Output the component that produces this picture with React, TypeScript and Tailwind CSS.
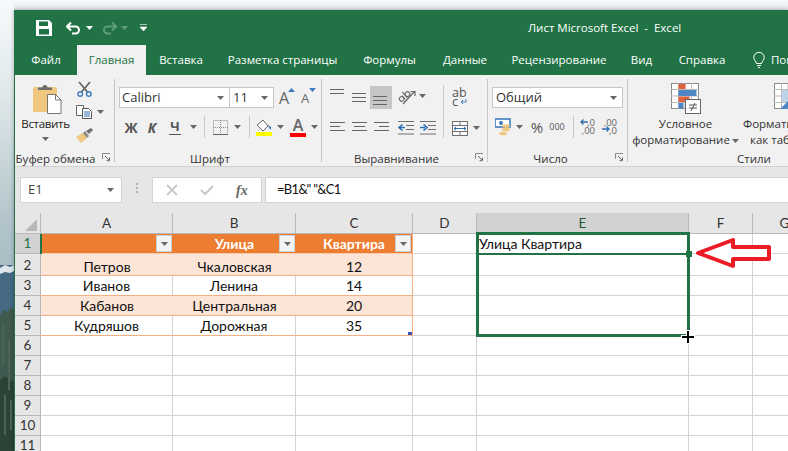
import React from "react";

const Caret = ({ c = "#666", className = "" }: { c?: string; className?: string }) => (
  <svg width="7" height="4" viewBox="0 0 7 4" className={`shrink-0 ${className}`}><path d="M0 0h7L3.5 4z" fill={c} /></svg>
);

const Lines = ({ rows }: { rows: [number, number][] }) => (
  <svg width="16" height="14" viewBox="0 0 16 14">
    {rows.map(([x, w], i) => <rect key={i} x={x} y={i * 4 + 1} width={w} height="1" fill="#666" />)}
  </svg>
);

const Launcher = () => (
  <svg width="9" height="9" viewBox="0 0 9 9" className="absolute right-[3px] top-[4px]">
    <path d="M.5 6V.5H8" fill="none" stroke="#8a8a8a" /><path d="M3 3l4 4M7.5 4.500v3.200H4.500" fill="none" stroke="#666" />
  </svg>
);

const Group = ({ w, label, launcher, pr = "", children }: { w: string; label: string; launcher?: boolean; pr?: string; children: React.ReactNode }) => (
  <div className={`flex h-full shrink-0 flex-col ${w}`}>
    <div className="min-h-0 flex-1">{children}</div>
    <div className={`relative h-[17px] text-center leading-[19px] text-[#333] ${pr}`}>
      {label}
      {launcher && <Launcher />}
    </div>
  </div>
);
const Sep = () => <div className="my-1 w-px shrink-0 bg-[#c6c6c6]" />;
const VSep = ({ className = "" }: { className?: string }) => <div className={`h-[22px] w-px shrink-0 bg-[#c8c8c8] ${className}`} />;

const Save = () => (
  <svg width="16" height="16" viewBox="0 0 16 16" className="shrink-0">
    <path fillRule="evenodd" d="M0 0h13l3 3v13H0zM3 1.500v4.500h9V1.500zM3 9v5.500h10V9z" fill="#fff" />
  </svg>
);
const Undo = ({ c }: { c: string }) => (
  <svg width="15" height="14" viewBox="0 0 15 14" className="block shrink-0">
    <path d="M1 5.500h8.500a3.500 3.500 0 0 1 0 7H6M5 1.500l-4 4 4 4" fill="none" stroke={c} strokeWidth="2" />
  </svg>
);
const Redo = ({ c }: { c: string }) => (
  <svg width="15" height="14" viewBox="0 0 15 14" className="block shrink-0">
    <path d="M14 5.500H5.500a3.500 3.500 0 0 0 0 7H9M10 1.500l4 4-4 4" fill="none" stroke={c} strokeWidth="2" />
  </svg>
);

const Paste = () => (
  <svg width="29" height="30" viewBox="0 0 29 30">
    <rect x="0" y="3" width="24" height="25" rx="1.500" fill="#efc77f" />
    <path d="M5 6V3.500h4.500a2.500 2.500 0 0 1 5 0H19V6z" fill="#6d6d6d" />
    <path d="M14.500 10.500h8l5.500 5.500v13.500H14.500z" fill="#fff" stroke="#777" />
    <path d="M22.500 10.500V16H28" fill="none" stroke="#777" />
  </svg>
);
const Scissors = () => (
  <svg width="15" height="16" viewBox="0 0 15 16" className="block">
    <path d="M2 1l8.500 10M13 1L4.500 11" stroke="#666" strokeWidth="1.800" fill="none" />
    <circle cx="3.200" cy="13" r="2.300" fill="none" stroke="#3f7cbd" strokeWidth="1.400" />
    <circle cx="11.800" cy="13" r="2.300" fill="none" stroke="#3f7cbd" strokeWidth="1.400" />
  </svg>
);
const Copy = () => (
  <svg width="16" height="14" viewBox="0 0 16 14">
    <path d="M.5.500h7v10h-7z" fill="#fff" stroke="#666" />
    <path d="M6.500 3.500h6l3 3v7h-9z" fill="#fff" stroke="#555" />
    <path d="M8 7h6M8 9h6M8 11h6" stroke="#2f6fb0" />
  </svg>
);
const Brush = () => (
  <svg width="17" height="15" viewBox="0 0 17 15" className="block">
    <path d="M0 9l5 6 6-5-4-5z" fill="#efc77f" />
    <path d="M7 5l4 5 2-2-4-5z" fill="#8a8a8a" />
    <path d="M10 3l3 3 4-4-2-2z" fill="#707070" />
  </svg>
);

const ABig = ({ up }: { up: boolean }) => (
  <span className="relative flex h-[21px] w-[14px] items-end justify-center text-[#666]">
    <span className={`${up ? "text-[16px]" : "text-[13px]"} leading-[19px]`}>A</span>
    <svg width="7" height="4" viewBox="0 0 7 4" className="absolute right-[-4px] top-[1px]"><path d={up ? "M0 4h7L3.500 0z" : "M0 0h7L3.500 4z"} fill="#3f7cbd" /></svg>
  </span>
);
const BorderIcon = () => (
  <svg width="15" height="15" viewBox="0 0 15 15">
    <rect x=".5" y=".5" width="14" height="14" fill="none" stroke="#888" strokeDasharray="1 1" />
    <path d="M7.500 0v15M0 7.500h15" stroke="#888" strokeDasharray="1 1" />
    <path d="M0 14.500h15" stroke="#666" />
  </svg>
);
const Fill = () => (
  <svg width="17" height="18" viewBox="0 0 17 18">
    <path d="M1 7l6-5 5 6-5 5z" fill="#fff" stroke="#666" />
    <path d="M12 7l3 2 0 3-2-2z" fill="#3f7cbd" />
    <rect x="0" y="14" width="16" height="4" fill="#ffff00" />
  </svg>
);
const FontColor = () => (
  <span className="flex w-4 flex-col items-center">
    <span className="text-[16px] font-semibold leading-[14px] text-[#666]">A</span>
    <span className="mt-[1px] h-1 w-4 bg-[#ff0000]" />
  </span>
);
const Orient = () => (
  <svg width="18" height="17" viewBox="0 0 18 17">
    <g transform="rotate(-40 6 9)" fill="#666" stroke="#666" strokeWidth="1.100">
      <circle cx="3" cy="9" r="2.300" fill="none" />
      <path d="M5.300 6.500v5" />
      <path d="M8 4v7.500" />
      <circle cx="10.500" cy="9" r="2.300" fill="none" />
    </g>
    <path d="M5 16L16 4M12.500 3.500H17V8" fill="none" stroke="#666" strokeWidth="1.200" />
  </svg>
);
const Wrap = () => (
  <span className="relative block h-[18px] w-[16px] whitespace-pre text-[12.5px] leading-[9px] text-[#555]">
    {"ab\nc"}
    <svg width="7" height="6" viewBox="0 0 7 6" className="absolute bottom-[1px] right-[1px]"><path d="M6 0v3H1M3 1L1 3l2 2" fill="none" stroke="#3f7cbd" /></svg>
  </span>
);
const Indent = ({ right }: { right: boolean }) => (
  <svg width="16" height="14" viewBox="0 0 16 14">
    <path d="M0 .5h16M8 4.500h8M8 8.500h8M0 13h16" stroke="#707070" />
    <path d={right ? "M0 6.500h5M3.500 3.500L7 6.500l-3.500 3" : "M7 6.500H2M4.500 3.500L1 6.500l3.500 3"} fill="none" stroke="#2f6fb0" strokeWidth="1.600" />
  </svg>
);
const Merge = () => (
  <svg width="16" height="15" viewBox="0 0 16 15">
    <rect x=".5" y=".5" width="15" height="14" fill="#fff" stroke="#707070" />
    <path d="M0 4.500h16M0 10.500h16M8 .5v4M8 10.500v4" stroke="#707070" />
    <path d="M2 7.500h12M4 5.800L2 7.500l2 1.700M12 5.800l2 1.700-2 1.700" fill="none" stroke="#2f6fb0" />
  </svg>
);
const Money = () => (
  <svg width="17" height="18" viewBox="0 0 17 18">
    <rect x="0" y="1" width="15" height="8" fill="#fff" stroke="#3f7cbd" strokeWidth="1.600" />
    <circle cx="6" cy="5" r="2" fill="#3f7cbd" />
    <ellipse cx="11" cy="8" rx="4" ry="1.800" fill="#efc77f" />
    <ellipse cx="11" cy="11.500" rx="4" ry="1.800" fill="#efc77f" />
    <ellipse cx="8" cy="15.500" rx="4" ry="1.800" fill="#efc77f" />
  </svg>
);
const Dec = ({ inc }: { inc: boolean }) => (
  <span className="relative block h-[16px] w-[15px] whitespace-pre text-right text-[9.5px] leading-[8px] text-[#666]">
    {inc ? ",00\n,0" : ",0\n,00"}
    <svg width="8" height="6" viewBox="0 0 8 6" className={`absolute left-0 ${inc ? "top-[7px]" : "top-0"}`}>
      <path d={inc ? "M0 3h7M4.500 .5L7 3 4.500 5.500" : "M8 3H1M3.500 .5L1 3l2.500 2.500"} fill="none" stroke="#2f6fb0" strokeWidth="1.300" />
    </svg>
  </span>
);
const CondFormat = () => (
  <svg width="30" height="31" viewBox="0 0 30 31">
    <rect x=".5" y=".5" width="27" height="25" fill="#fff" stroke="#8a8a8a" />
    <path d="M7.500 0v26M14 0v26M20.500 0v26M0 6.500h28M0 13h28M0 19.500h28" stroke="#bdbdbd" />
    <rect x="7.500" y="1" width="7" height="5" fill="#e0653f" />
    <rect x="7.500" y="7" width="18" height="6" fill="#4f86c6" />
    <rect x="7.500" y="13.500" width="11" height="5.500" fill="#e0653f" />
    <rect x="7.500" y="20" width="5" height="5.500" fill="#4f86c6" />
    <rect x="14.500" y="16.500" width="15" height="14" fill="#fff" stroke="#666" />
    <path d="M18 22h8M18 25h8M24 20l-4 8" stroke="#555" fill="none" />
  </svg>
);
const TableFormat = () => (
  <svg width="30" height="31" viewBox="0 0 30 31" className="shrink-0">
    <rect x=".5" y=".5" width="29" height="25" fill="#fff" stroke="#8a8a8a" />
    <path d="M7.500 0v26M14 0v26M20.500 0v26M0 6.500h30M0 13h30M0 19.500h30" stroke="#bdbdbd" />
    <rect x="8" y="7" width="12" height="12" fill="#bcd3ea" />
    <path d="M6 26L22 10v16z" fill="#4f86c6" />
  </svg>
);

const tabs: [string, string][] = [
  ["Файл", "w-[62px]"],
  ["Главная", "w-[69px]"],
  ["Вставка", "w-[70px]"],
  ["Разметка страницы", "w-[133px]"],
  ["Формулы", "w-[81px]"],
  ["Данные", "w-[70px]"],
  ["Рецензирование", "w-[118px]"],
  ["Вид", "w-[47px]"],
  ["Справка", "w-[74px]"],
];

const TitleBar = () => (
  <div className="relative flex h-[35px] shrink-0 items-center bg-[#217346] pl-[21px] text-white">
    <Save />
    <span className="ml-[14px]"><Undo c="#fff" /></span>
    <Caret c="#fff" className="ml-[5px]" />
    <span className="ml-[9px]"><Redo c="#5f9a7b" /></span>
    <Caret c="#5f9a7b" className="ml-[4px]" />
    <svg width="7" height="7" viewBox="0 0 7 7" className="ml-[12px]"><path d="M0 .5h7M0 3h7L3.500 7z" fill="#fff" stroke="#fff" strokeWidth=".6" /></svg>
    <span className="ml-[381px] whitespace-pre text-[11.5px]">Лист Microsoft Excel  -  Excel</span>
  </div>
);

const TabBar = () => (
  <div className="flex h-[30px] shrink-0 items-stretch bg-[#217346] text-white">
    {tabs.map(([t, w]) => (
      <div key={t} className={`flex shrink-0 items-center justify-center ${w} ${t === "Главная" ? "bg-[#f1f1f1] text-[#217346]" : ""}`}>{t}</div>
    ))}
    <div className="ml-[14px] flex shrink-0 items-center gap-[6px]">
      <svg width="12" height="16" viewBox="0 0 12 16"><path d="M3.500 11.500C3 9 .8 8 .8 5.500a5.200 5.200 0 0 1 10.400 0C11.200 8 9 9 8.500 11.500zM4 13.500h4M5 15.500h2" fill="none" stroke="#fff" /></svg>
      <span className="whitespace-nowrap">Помощник</span>
    </div>
  </div>
);

const Ribbon = () => (
  <div className="flex h-[92px] shrink-0 overflow-hidden border-b border-[#d0d0d0] bg-[#f1f1f1] text-[#333]">
    <Group w="w-[99px]" label="Буфер обмена" launcher pr="pr-[18px]">
      <div className="flex">
        <div className="flex w-[61px] shrink-0 flex-col items-center pt-[9px]">
          <span className="ml-[4px] flex"><Paste /></span>
          <span className="mt-[1px] text-[11.5px] leading-[18px] tracking-[-0.3px] text-[#222]">Вставить</span>
          <Caret className="mt-[4px]" />
        </div>
        <div className="flex flex-col pt-[6px]">
          <span className="ml-[1px] h-[16px]"><Scissors /></span>
          <span className="mt-[8px] flex h-[14px] items-center"><Copy /><Caret className="ml-[5px]" /></span>
          <span className="mt-[9px] h-[15px]"><Brush /></span>
        </div>
      </div>
    </Group>
    <Sep />
    <Group w="w-[206px]" label="Шрифт" pr="pr-[16px]">
      <div className="mt-3 flex h-[21px] items-stretch pl-1 text-[13px]">
        <div className="flex w-[111px] items-center justify-between border border-[#c6c6c6] bg-white pl-[2px] pr-[5px]">Calibri<Caret /></div>
        <div className="flex w-[44px] items-center justify-between border border-l-0 border-[#c6c6c6] bg-white pl-[3px] pr-[5px]">11<Caret /></div>
        <span className="ml-[3px] flex"><ABig up /></span>
        <span className="ml-[7px] flex"><ABig up={false} /></span>
      </div>
      <div className="mt-2 flex h-[22px] items-center pl-[8px] text-[#555]">
        <span className="w-[16px] text-center text-[14px] font-bold">Ж</span>
        <span className="ml-[8px] w-[10px] text-center text-[14px] font-bold italic">К</span>
        <span className="ml-[12px] w-[12px] border-b border-[#555] text-center text-[13px] font-bold leading-[15px]">Ч</span>
        <Caret className="ml-[9px]" />
        <VSep className="ml-[7px]" />
        <span className="ml-[8px] flex"><BorderIcon /></span>
        <Caret className="ml-[6px]" />
        <VSep className="ml-[8px]" />
        <span className="ml-[6px] flex"><Fill /></span>
        <Caret className="ml-[4px]" />
        <span className="ml-[6px] flex"><FontColor /></span>
        <Caret className="ml-[5px]" />
      </div>
    </Group>
    <Sep />
    <Group w="w-[165px]" label="Выравнивание" launcher pr="pr-[16px]">
      <div className="flex pl-[8px]">
        <div className="flex w-[113px] flex-col">
          <div className="mt-[11px] flex h-[23px] items-start">
            <span className="mt-[2px] flex"><Lines rows={[[0, 14], [0, 14]]} /></span>
            <span className="ml-[6px] mt-[6px] flex"><Lines rows={[[0, 14], [0, 14], [0, 14]]} /></span>
            <span className="ml-[2px] flex h-[23px] w-[22px] items-end justify-center bg-[#c6c6c6]"><Lines rows={[[0, 14], [0, 14], [0, 14]]} /></span>
            <span className="ml-[6px] mt-[2px] flex"><Orient /></span>
            <Caret className="ml-[3px] mt-[8px]" />
          </div>
          <div className="mt-[8px] flex h-[22px] items-center">
            <Lines rows={[[0, 15], [0, 10], [0, 15]]} />
            <span className="ml-[6px] flex"><Lines rows={[[0, 15], [2, 11], [0, 15]]} /></span>
            <span className="ml-[6px] flex"><Lines rows={[[0, 15], [5, 10], [0, 15]]} /></span>
            <span className="ml-[8px] flex"><Indent right={false} /></span>
            <span className="ml-[6px] flex"><Indent right /></span>
          </div>
        </div>
        <div className="mt-[10px] h-[53px] w-px shrink-0 bg-[#c8c8c8]" />
        <div className="flex flex-col pl-[8px]">
          <span className="mt-[3px] flex h-[23px] pt-[10px]"><Wrap /></span>
          <span className="mt-[18px] flex h-[18px] items-center"><Merge /><Caret className="ml-[5px]" /></span>
        </div>
      </div>
    </Group>
    <Sep />
    <Group w="w-[139px]" label="Число" launcher pr="pr-[14px]">
      <div className="ml-1 mt-3 flex h-[21px] w-[131px] items-center justify-between border border-[#c6c6c6] bg-white pl-[3px] pr-[5px] text-[13px]">Общий<Caret /></div>
      <div className="mt-2 flex h-[22px] items-center pl-[7px] text-[#555]">
        <Money />
        <Caret className="ml-[4px]" />
        <span className="ml-[7px] w-[14px] text-center text-[15px] leading-[22px]">%</span>
        <span className="ml-[5px] w-[16px] text-center text-[9px]">000</span>
        <VSep className="ml-[8px]" />
        <span className="ml-[6px] flex"><Dec inc={false} /></span>
        <span className="ml-[7px] flex"><Dec inc /></span>
      </div>
    </Group>
    <Sep />
    <Group w="w-[252px]" label="Стили">
      <div className="flex pt-[8px]">
        <div className="flex w-[115px] shrink-0 flex-col items-center">
          <span className="flex"><CondFormat /></span>
          <span className="mt-[2px] leading-[16px]">Условное</span>
          <span className="flex items-center gap-[2px] whitespace-nowrap leading-[16px]">форматирование<Caret className="mt-[1px]" /></span>
        </div>
        <div className="flex shrink-0 flex-col items-start">
          <span className="ml-[31px] flex"><TableFormat /></span>
          <span className="mt-[2px] whitespace-nowrap leading-[16px]">Форматировать</span>
          <span className="ml-[7px] whitespace-nowrap leading-[16px]">как таблицу</span>
        </div>
      </div>
    </Group>
  </div>
);

const FormulaBar = () => (
  <div className="flex h-[46px] shrink-0 bg-[#e6e6e6] pl-[5px] pt-[10px]">
    <div className="flex h-[26px] w-[102px] items-center justify-between border border-[#d4d4d4] bg-white pl-[7px] pr-[7px] text-[13px] text-[#444]">E1<Caret /></div>
    <div className="ml-[13px] flex w-[4px] flex-col items-center gap-[2px] pt-[6px]">
      <span className="h-[2px] w-[2px] bg-[#b0b0b0]" /><span className="h-[2px] w-[2px] bg-[#b0b0b0]" /><span className="h-[2px] w-[2px] bg-[#b0b0b0]" />
    </div>
    <div className="ml-[13px] flex h-[26px] w-[110px] items-center border border-[#d4d4d4] bg-white pl-[13px]">
      <svg width="12" height="12" viewBox="0 0 12 12"><path d="M1 1l10 10M11 1L1 11" stroke="#c8c8c8" strokeWidth="1.800" /></svg>
      <svg width="14" height="12" viewBox="0 0 14 12" className="ml-[22px]"><path d="M1 6l4 4 8-8" fill="none" stroke="#c8c8c8" strokeWidth="2" /></svg>
      <span className="ml-[22px] font-['Liberation_Serif',serif] text-[14px] font-bold italic text-[#666]">fx</span>
    </div>
    <div className="ml-[3px] flex h-[26px] flex-1 items-center border border-r-0 border-[#d4d4d4] bg-white pl-[11px] font-['Lato',sans-serif] text-[13px] tracking-[-0.7px] text-[#111]">=B1&amp;" "&amp;C1</div>
  </div>
);

const cols = ["A", "B", "C", "D", "E", "F", "G"];
const data = [
  ["", "Улица", "Квартира"],
  ["Петров", "Чкаловская", "12"],
  ["Иванов", "Ленина", "14"],
  ["Кабанов", "Центральная", "20"],
  ["Кудряшов", "Дорожная", "35"],
];

const FilterBtn = () => (
  <span className="absolute bottom-[1px] right-[1px] flex h-[17px] w-[16px] items-center justify-center border border-[#c8d0d8] bg-[#f4f4f4]">
    <Caret c="#666" />
  </span>
);

const Sheet = () => (
  <div className="relative min-h-0 flex-1 overflow-hidden bg-white font-['Lato',sans-serif] text-[14px] text-[#111]">
    <div className="grid w-[840px] grid-cols-[26px_132px_123px_117px_64px_212px_64px_64px] grid-rows-[21px_20px_22px_repeat(9,20px)]">
      <div className="flex items-end justify-end border-b border-r border-[#b8b8b8] bg-[#e6e6e6] pb-[2px] pr-[3px]">
        <svg width="12" height="12" viewBox="0 0 12 12"><path d="M12 0v12H0z" fill="#b8b8b8" /></svg>
      </div>
      {cols.map((c) => (
        <div key={c} className={`flex items-center justify-center border-b border-r border-[#b8b8b8] pt-[1px] text-[13.5px] ${c === "E" ? "bg-[#d2d2d2] text-[#1f5c3b]" : "bg-[#e6e6e6] text-[#333]"}`}>{c}</div>
      ))}
      {Array.from({ length: 11 }, (_, r) => (
        <React.Fragment key={r}>
          <div className={`flex items-end justify-center border-b border-r border-[#b8b8b8] pb-[1px] text-[13.5px] leading-[17px] ${r === 0 ? "bg-[#d2d2d2] text-[#217346]" : "bg-[#e6e6e6] text-[#333]"}`}>{r + 1}</div>
          {cols.map((c, ci) => {
            const inTable = r < 5 && ci < 3;
            const isHead = r === 0 && inTable;
            const band = inTable && (r === 1 || r === 3);
            const cls = isHead
              ? "bg-[#ed7d31] font-bold text-white border-b border-white/60"
              : band
                ? "bg-[#fce4d6] border-b border-[#f4b084]"
                : inTable
                  ? "border-b border-[#f4b084] border-r border-r-[#d4d4d4]"
                  : "border-b border-r border-[#d4d4d4]";
            const edge = inTable && ci === 2 ? "border-r border-r-[#f4b084]" : "";
            const value = inTable ? data[r][ci] : c === "E" && r === 0 ? "Улица Квартира" : "";
            return (
              <div key={c} className={`relative flex items-end whitespace-nowrap leading-[17px] ${r === 1 ? "" : "pb-[1px]"} ${inTable ? "justify-center" : "pl-[2px]"} ${cls} ${edge}`}>
                {value}
                {isHead && <FilterBtn />}
              </div>
            );
          })}
        </React.Fragment>
      ))}
    </div>
    <div className="absolute left-[25px] top-[21px] h-[20px] w-[2px] bg-[#217346]" />
    <span className="absolute left-[393px] top-[119px] h-[3px] w-[4px] bg-[#3f4fb0]" />
    <div className="absolute left-[461px] top-[19px] h-[105px] w-[214px] border-[3px] border-[#217346]">
      <div className="h-[20px] border-b-2 border-[#217346]" />
    </div>
    <span className="absolute left-[671px] top-[38px] h-[6px] w-[6px] bg-[#217346]" />
    <svg width="14" height="14" viewBox="0 0 14 14" className="absolute left-[666px] top-[117px]"><path d="M7 0v14M0 7h14" stroke="#fff" strokeWidth="4" /><path d="M7 1v12M1 7h12" stroke="#000" strokeWidth="2" /></svg>
    <svg width="78" height="34" viewBox="0 0 78 34" className="absolute left-[680px] top-[23px]">
      <path d="M3 17L38 4v7h36v12H38v7z" fill="#fff" stroke="#ed1c24" strokeWidth="4" strokeLinejoin="round" />
    </svg>
  </div>
);

const Landscape = () => (
  <svg width="14" height="451" viewBox="0 0 14 451" preserveAspectRatio="none" className="block h-[451px] w-[14px] shrink-0">
    <defs>
      <linearGradient id="sky" x1="0" y1="0" x2="0" y2="1">
        <stop offset="0" stopColor="#f7fafb" />
        <stop offset=".35" stopColor="#dfe8ea" />
        <stop offset=".8" stopColor="#b4c6cc" />
        <stop offset="1" stopColor="#a9bcc4" />
      </linearGradient>
    </defs>
    <rect width="14" height="270" fill="url(#sky)" />
    <rect y="265" width="14" height="186" fill="#466a84" />
    <path d="M0 268l5-3 5 2 4-2v6l-4 2-5-1-5 2z" fill="#dfe6ea" />
    <path d="M0 315l4-6 3 3 4-5 3 3v141H0z" fill="#3f5a4e" />
    <path d="M0 380l5-4 9 6v69H0z" fill="#2c4237" />
    <path d="M3 325v40M9 340v50M5 395v40M11 400v30" stroke="#4a6558" strokeWidth="2" />
  </svg>
);

export default function App() {
  return (
    <div className="relative flex h-[451px] w-[788px] overflow-hidden font-['Open_Sans',sans-serif] text-[11.5px]">
      <Landscape />
      <div className="flex min-w-0 flex-1 flex-col">
        <div className="h-[10px] shrink-0 bg-[linear-gradient(#f8fbfc,#dfe4e6)]" />
        <div className="flex min-h-0 flex-1 flex-col border-l border-[#217346] shadow-[0_0_4px_rgba(0,0,0,0.3)]">
          <TitleBar />
          <TabBar />
          <Ribbon />
          <FormulaBar />
          <Sheet />
        </div>
      </div>
    </div>
  );
}
